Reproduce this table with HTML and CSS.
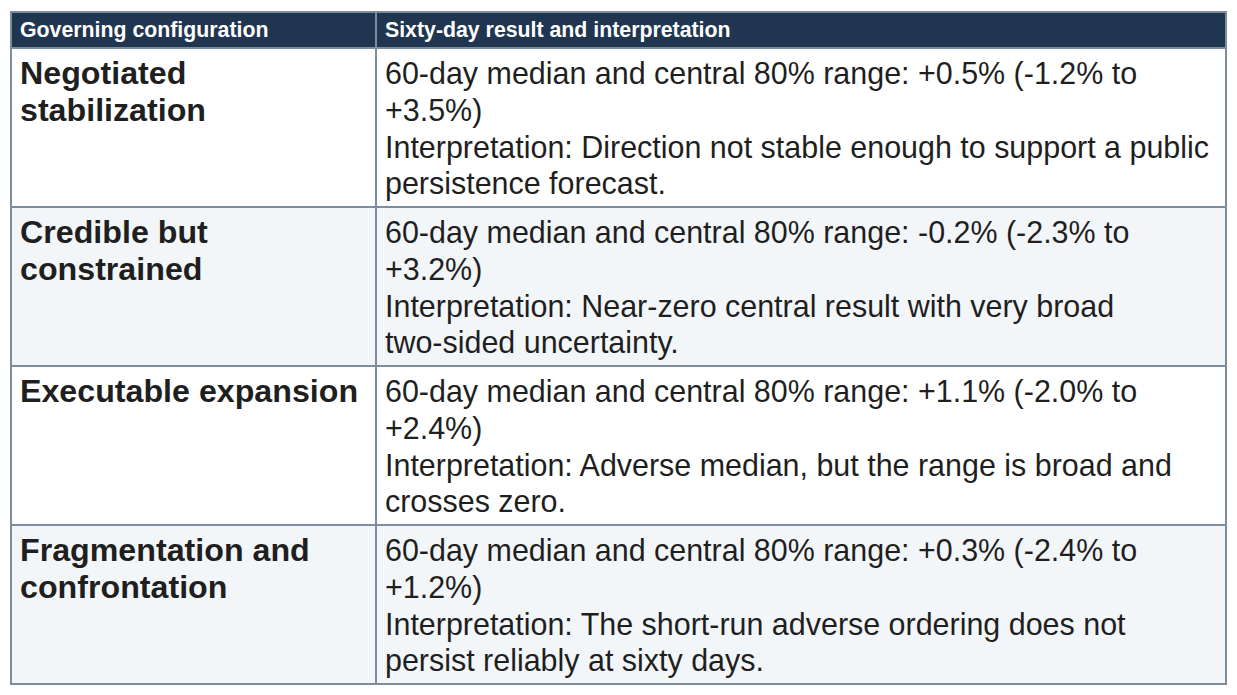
FILE: index.html
```html
<!DOCTYPE html>
<html lang="en">
<head>
<meta charset="utf-8">
<title>Sixty-day results</title>
<link rel="stylesheet" href="styles.css">
</head>
<body>
<table class="results">
  <colgroup>
    <col class="col-config">
    <col class="col-result">
  </colgroup>
  <thead>
    <tr>
      <th>Governing configuration</th>
      <th>Sixty-day result and interpretation</th>
    </tr>
  </thead>
  <tbody>
    <tr>
      <td class="config">Negotiated stabilization</td>
      <td class="result">60-day median and central 80% range: +0.5% (-1.2% to +3.5%)<br>Interpretation: Direction not stable enough to support a public persistence forecast.</td>
    </tr>
    <tr class="alt">
      <td class="config">Credible but constrained</td>
      <td class="result">60-day median and central 80% range: -0.2% (-2.3% to +3.2%)<br>Interpretation: Near-zero central result with very broad <span class="nowrap">two-sided</span> uncertainty.</td>
    </tr>
    <tr>
      <td class="config">Executable expansion</td>
      <td class="result">60-day median and central 80% range: +1.1% (-2.0% to +2.4%)<br>Interpretation: Adverse median, but the range is broad and crosses zero.</td>
    </tr>
    <tr class="alt">
      <td class="config">Fragmentation and confrontation</td>
      <td class="result">60-day median and central 80% range: +0.3% (-2.4% to +1.2%)<br>Interpretation: The short-run adverse ordering does not persist reliably at sixty days.</td>
    </tr>
  </tbody>
</table>
</body>
</html>
```

FILE: styles.css
```css
html, body {
  margin: 0;
  padding: 0;
  background: #ffffff;
}

body {
  padding: 11px 10px 0 10px;
  font-family: "Liberation Sans", Arial, sans-serif;
  color: #1f1f1f;
}

.results {
  width: 1217px;
  border-collapse: collapse;
  table-layout: fixed;
}

.col-config {
  width: 365px;
}

.results th,
.results td {
  border: 2px solid #7e8d9d;
  text-align: left;
  vertical-align: top;
}

.results th {
  background: #1f3550;
  color: #ffffff;
  font-weight: bold;
  font-size: 21.3px;
  line-height: 34px;
  height: 34px;
  padding: 0 8px;
  box-sizing: border-box;
}

.results td {
  padding: 6px 8px 4px 8px;
  line-height: 36.75px;
}

.results tr.alt td {
  background: #f3f6f9;
}

.config {
  font-weight: bold;
  font-size: 32.2px;
}

.result {
  font-size: 30.45px;
}

.nowrap {
  white-space: nowrap;
}
```
